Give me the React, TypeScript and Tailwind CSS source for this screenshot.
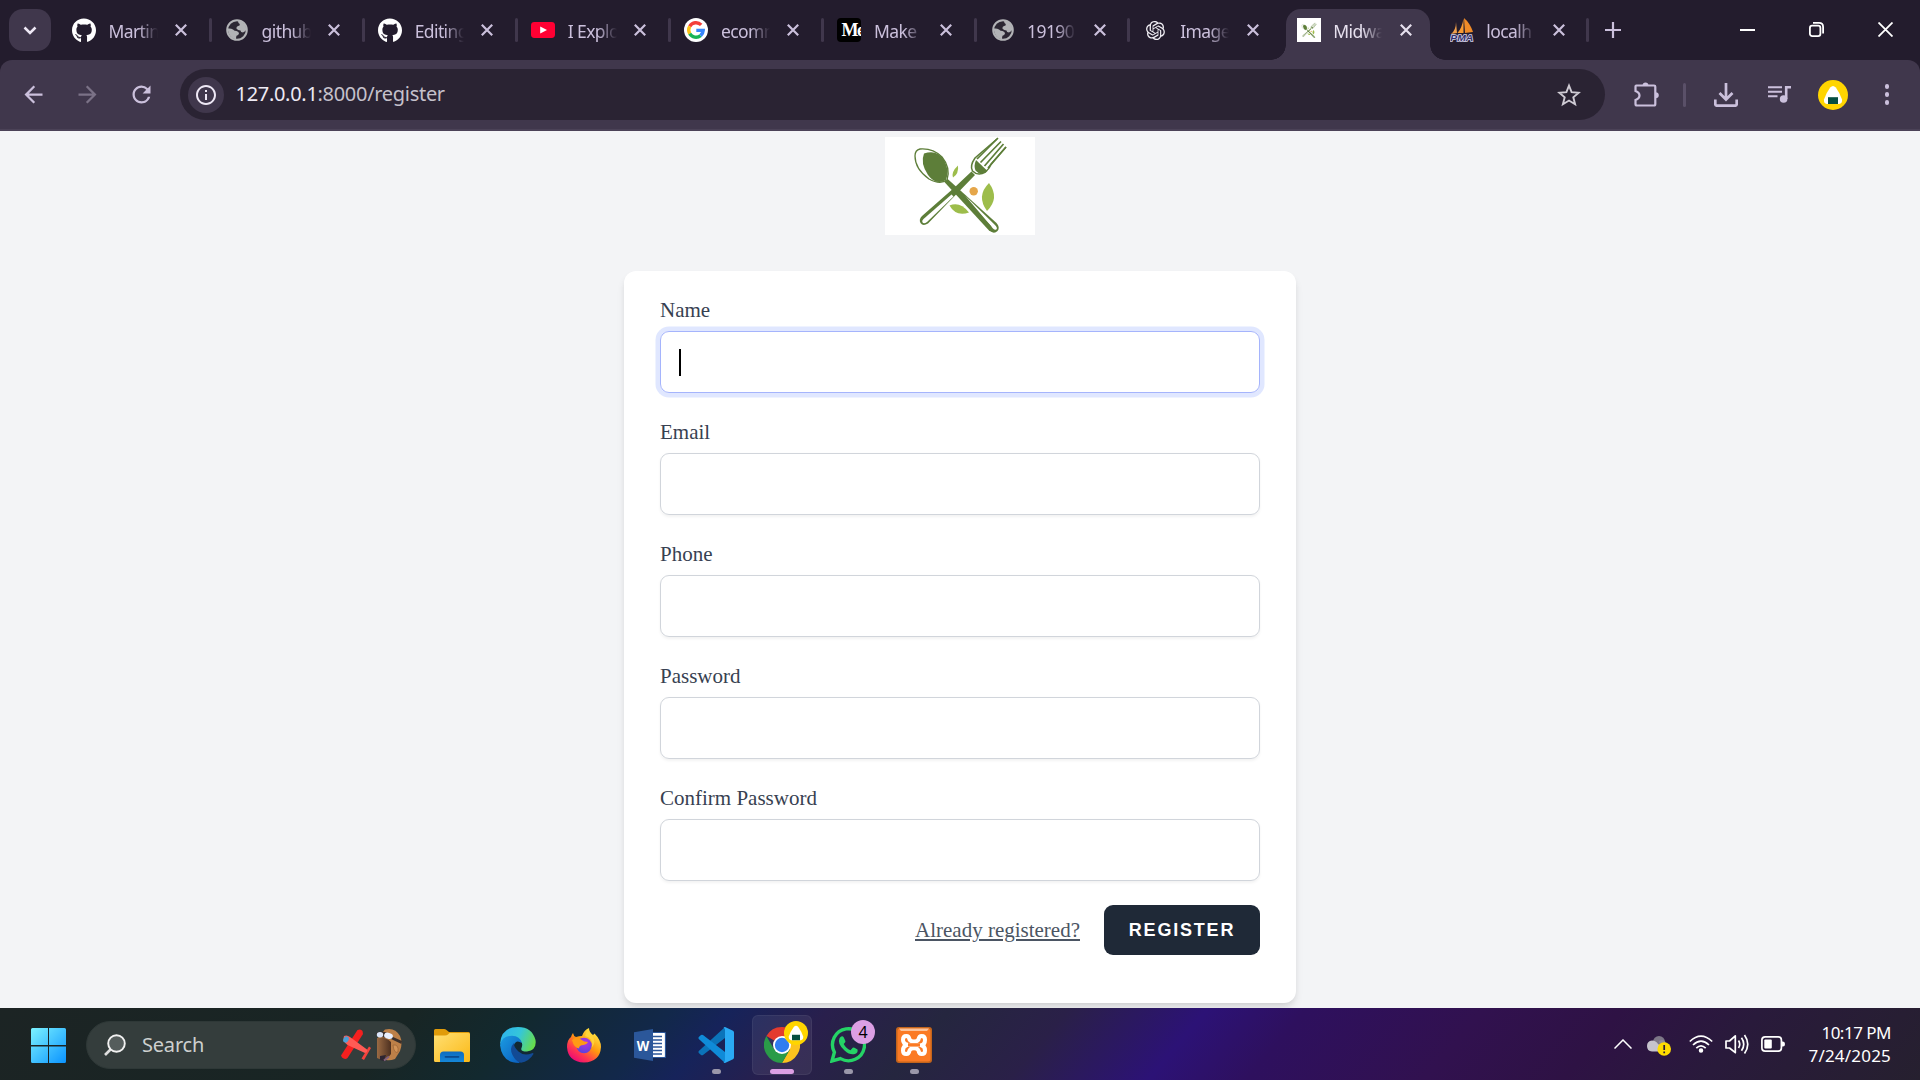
import type { ReactNode } from "react";
import { FaGithub } from "react-icons/fa";
import { RiOpenaiFill } from "react-icons/ri";
import {
  MdArrowBack,
  MdArrowForward,
  MdInfoOutline,
  MdRefresh,
} from "react-icons/md";

/* ---------- favicons ---------- */

const Globe = () => (
  <svg viewBox="0 0 22 22" className="size-[22px]">
    <circle cx="11" cy="11" r="9.800" fill="#2c2733" stroke="#b2b3b6" strokeWidth="2" />
    <path d="M12 1.500 Q19 3 20.500 10 Q20 12.500 17 13.500 Q14.500 13.500 14.500 11.500 Q12 11.500 10.500 9.800 Q10 7.600 12 7 Q14.500 6.500 13.500 4.800 Q12 4 12 1.500Z" fill="#b2b3b6" />
    <path d="M1.500 9.500 Q5 9 7 10.500 Q8.500 12 10.500 12 Q13 12.500 13 14.500 Q12.500 16.500 10.500 16.800 Q10 18 10 20.500 Q3 19.500 1.500 9.500Z" fill="#b2b3b6" />
  </svg>
);

const YouTube = () => (
  <svg viewBox="0 0 24 16" className="h-4 w-6">
    <rect width="24" height="16" rx="3.4" fill="#ff0033" />
    <path d="M9.2 4.4 L16 8 L9.2 11.6Z" fill="#fff" />
  </svg>
);

const Google = () => (
  <svg viewBox="0 0 24 24" className="size-6">
    <circle cx="12" cy="12" r="12" fill="#fff" />
    <g fill="none" strokeWidth="3.4">
      <path d="M17.2 6.9 A7.3 7.3 0 0 0 5.7 8.4" stroke="#f43f3a" />
      <path d="M5.7 8.4 A7.3 7.3 0 0 0 5.7 15.6" stroke="#fcc216" />
      <path d="M5.7 15.6 A7.3 7.3 0 0 0 16.6 17.6" stroke="#18b455" />
      <path d="M16.6 17.6 A7.3 7.3 0 0 0 19.2 12.4 L12.3 12.4" stroke="#3685fb" />
    </g>
  </svg>
);

const Medium = () => (
  <div className="flex size-6 items-center overflow-hidden rounded-[4px] bg-black pl-[4px] font-['Liberation_Serif',serif] text-[18px] leading-6 font-bold tracking-[-1.5px] text-white">
    Me
  </div>
);

const Cutlery = ({ className }: { className: string }) => (
  <svg viewBox="0 0 150 98" className={className}>
    {/* handles */}
    <path d="M86.500 34.500 L90 38 L43 86.500 Q38 89.500 35.500 86 Q33.500 82.500 37 79 L70 50Z" fill="#5d7e39" />
    <path d="M66.500 57.500 L68.500 59.500 L42 85 Q38.500 87.500 37.300 85 Q36.800 83.500 38.500 82Z" fill="#fff" />
    <path d="M61 40.500 L58 43.500 L104 93.500 Q109 97.500 112.500 94 Q115.500 90.500 111.500 86Z" fill="#5d7e39" />
    <path d="M80 58.500 L110 88 Q113 91 111.300 92.500 Q110 93.500 108 91.500 L105.500 88.500Z" fill="#fff" />
    <path d="M78 60 L106 90" stroke="#5d7e39" strokeWidth="1.200" />
    {/* spoon */}
    <path d="M35 12 Q48 11 57 20 Q66 31 62 43 Q55 48 44 42 Q30 32 30 19 Q30 13 35 12Z" fill="#fff" stroke="#5d7e39" strokeWidth="1.300" />
    <path d="M39 16.500 Q52 12 59 23 Q65 34 61 43 Q51 49 43 38 Q35 26 39 16.500Z" fill="#5d7e39" />
    {/* fork */}
    <path d="M112 2 L90 21 Q84.500 29 87.500 34 Q93 39.500 100.500 35 Q105 31 106 27 L121 10" fill="#fff" stroke="#5d7e39" strokeWidth="1.500" />
    <path d="M91 23 L102.500 34 Q95 39 90.500 33.500 Q88.500 29 91 23Z" fill="#5d7e39" />
    <path d="M113 1 L92 22 M116 4.500 L95.500 25.500 M118.500 7 L99.500 29 M121 10 L103 31" stroke="#5d7e39" strokeWidth="1.700" fill="none" />
    {/* leaves */}
    <path d="M73 28.500 Q66 35 68 40.500 Q74 37 73 28.500Z" fill="#9dbd4b" />
    <path d="M104 46 Q91 59 102 74 Q115 61 104 46Z" fill="#9dbd4b" />
    <path d="M64.500 68.500 Q75 64 84 75.500 Q71 80 64.500 68.500Z" fill="#9dbd4b" />
    <circle cx="88.700" cy="54.200" r="4.200" fill="#e5a64a" />
  </svg>
);

const MidwayIcon = () => (
  <div className="flex size-6 items-center justify-center overflow-hidden bg-white">
    <Cutlery className="h-[17px] w-[24px] shrink-0" />
  </div>
);

const PhpMyAdmin = () => (
  <svg viewBox="0 0 24 24" className="size-6">
    <path d="M6 4 Q6 12 1 16 L7 15Z" fill="#f0a04c" />
    <path d="M13.500 .5 Q12 10 7.500 15 L13.500 15Z" fill="#f79a33" />
    <path d="M14 0 Q20 5 23 14 L15 15Z" fill="#ef8b28" />
    <text x=".3" y="23" fontFamily="Liberation Sans, sans-serif" fontSize="9.500" fontWeight="bold" fontStyle="italic" textLength="23" lengthAdjust="spacingAndGlyphs" fill="#34336c" stroke="#d5d2ea" strokeWidth="1.500" paintOrder="stroke">
      PMA
    </text>
  </svg>
);

/* Rice-ball profile picture */
const Onigiri = ({ className }: { className: string }) => (
  <svg viewBox="0 0 30 30" className={className}>
    <circle cx="15" cy="15" r="15" fill="#ffd500" />
    <path d="M12.200 7.400 Q15 4.400 17.800 7.400 Q22 13 24 19.500 Q24.500 23.500 21 24 L9 24 Q5.500 23.500 6 19.500 Q8 13 12.200 7.400Z" fill="#fff" />
    <rect x="10" y="17.200" width="10" height="6.800" fill="#064e40" />
  </svg>
);

/* ---------- tab strip ---------- */

const Cross = () => (
  <svg viewBox="0 0 12 12" className="size-3">
    <path d="M.8 .8 L11.200 11.200 M11.200 .8 L.8 11.200" stroke="currentColor" strokeWidth="2.200" />
  </svg>
);

type TabInfo = { title: string; icon: ReactNode; active?: boolean; noDivider?: boolean };

const tabs: TabInfo[] = [
  { title: "Martin", icon: <FaGithub className="size-[25px] text-white" /> },
  { title: "github", icon: <Globe /> },
  { title: "Editing", icon: <FaGithub className="size-[25px] text-white" /> },
  { title: "I Explo", icon: <YouTube /> },
  { title: "ecomm", icon: <Google /> },
  { title: "Make", icon: <Medium /> },
  { title: "19190", icon: <Globe /> },
  { title: "Image", icon: <RiOpenaiFill className="size-[23px] text-[#f0eef4]" />, noDivider: true },
  { title: "Midwa", icon: <MidwayIcon />, active: true, noDivider: true },
  { title: "localh", icon: <PhpMyAdmin /> },
];

const Tab = ({ title, icon, active, noDivider }: TabInfo) => (
  <div className="flex h-[60px] w-[153.1px] shrink-0 items-start pt-[9px]">
    <div
      className={
        active
          ? "relative flex h-[51px] w-36 items-start rounded-t-[15px] bg-[#40374c] pl-[11px] text-[#e6e0ee]"
          : "relative flex h-[51px] w-36 items-start pl-[11px] text-[#cbc0dc]"
      }
    >
      {active && (
        <>
          <div className="absolute bottom-0 -left-[15px] size-[15px] bg-[radial-gradient(circle_at_0_0,transparent_14.5px,#40374c_15px)]" />
          <div className="absolute -right-[15px] bottom-0 size-[15px] bg-[radial-gradient(circle_at_100%_0,transparent_14.5px,#40374c_15px)]" />
        </>
      )}
      <div className="flex h-[42px] w-6 shrink-0 items-center justify-center">{icon}</div>
      <div className="ml-[12.5px] h-[45px] w-[49px] overflow-hidden [mask-image:linear-gradient(to_right,black_60%,transparent_100%)] text-[17.5px] leading-[45px] tracking-[-0.6px] whitespace-nowrap">
        {title}
      </div>
      <div className="ml-[17.5px] flex h-[42px] items-center">
        <Cross />
      </div>
    </div>
    {!noDivider && <div className="mt-[9px] ml-[3.500px] h-6 w-[3px] rounded-sm bg-[#40374c]" />}
  </div>
);

const TabStrip = () => (
  <div className="flex h-[60px] items-start bg-[#231c2d]">
    <div className="mt-[9px] ml-[9px] flex size-[42px] shrink-0 items-center justify-center rounded-[14px] bg-[#40374c]">
      <svg viewBox="0 0 14 9" className="h-[9px] w-[14px]">
        <path d="M1.500 1.500 L7 7 L12.500 1.500" fill="none" stroke="#eee8f5" strokeWidth="2.500" />
      </svg>
    </div>
    <div className="ml-[10px] flex">
      {tabs.map((t) => (
        <Tab key={t.title} {...t} />
      ))}
    </div>
    <div className="flex h-[60px] w-[42px] shrink-0 items-center justify-center">
      <svg viewBox="0 0 16 16" className="size-4 shrink-0">
        <path d="M8 0 V16 M0 8 H16" stroke="#cbc0dc" strokeWidth="2.200" />
      </svg>
    </div>
    <div className="ml-auto flex h-[59px] items-center text-white">
      <div className="flex w-[69px] justify-center">
        <div className="h-[2px] w-[15px] bg-white" />
      </div>
      <div className="flex w-[69px] justify-center">
        <svg viewBox="0 0 15 15" className="size-[15px]" fill="none" stroke="#fff" strokeWidth="1.800">
          <rect x=".9" y="3.600" width="10.500" height="10.500" rx="2.300" />
          <path d="M4 .9 H10 Q14.100 .9 14.100 5 V11.500" />
        </svg>
      </div>
      <div className="flex w-[69px] justify-center">
        <svg viewBox="0 0 15 15" className="size-[15px]">
          <path d="M.5 .5 L14.500 14.500 M14.500 .5 L.5 14.500" stroke="#fff" strokeWidth="1.800" />
        </svg>
      </div>
    </div>
  </div>
);

/* ---------- toolbar ---------- */

const Toolbar = () => (
  <div className="h-[71px] bg-[#231c2d]">
    <div className="flex h-[71px] items-center rounded-t-[12px] border-b-2 border-[#4b4257] bg-[#40374c] text-[#cbc0dc]">
      <div className="ml-[6px] flex w-[54px] justify-center">
        <MdArrowBack className="size-[27px]" />
      </div>
      <div className="flex w-[54px] justify-center">
        <MdArrowForward className="size-[27px] text-[#7b7287]" />
      </div>
      <div className="flex w-[54px] justify-center">
        <MdRefresh className="size-[27px]" />
      </div>
      <div className="ml-[12px] flex h-[51px] w-[1425px] items-center rounded-full bg-[#2a2333] pl-[8px]">
        <div className="flex size-9 items-center justify-center rounded-full bg-[#40374c]">
          <MdInfoOutline className="size-6 text-[#eee8f5]" />
        </div>
        <div className="mb-[2px] ml-[11.5px] text-[20px] leading-[30px] tracking-[-0.3px] text-[#c5c1cb]">
          <span className="text-[#eeeaf4]">127.0.0.1</span>:8000/register
        </div>
        <svg viewBox="0 0 24 24" className="mr-[24px] ml-auto size-[24px]">
          <path d="M12 2.600 L14.600 9.200 L21.800 9.700 L16.300 14.300 L18.100 21.300 L12 17.500 L5.900 21.300 L7.700 14.300 L2.200 9.700 L9.400 9.200Z" fill="none" stroke="#cfcbd4" strokeWidth="1.900" />
        </svg>
      </div>
      <div className="ml-[27px] flex w-[28px] justify-center">
        <svg viewBox="0 0 26 26" className="size-[26px]">
          <path d="M3.300 3.500 H21 Q22.300 3.500 22.300 4.800 V22 Q22.300 23.500 21 23.500 H4 Q2.500 23.500 2.500 22 V18 Q6.500 16.500 6.500 13.500 Q6.500 10.500 2.500 9 V4.500 Q2.500 3.500 3.300 3.500Z" fill="none" stroke="currentColor" strokeWidth="2.200" />
          <path d="M9.500 3.500 Q9.700 .5 12.500 .5 Q15.300 .5 15.500 3.500Z M22.500 10.300 Q25.800 10.500 25.800 13.300 Q25.800 16.100 22.500 16.300Z" fill="currentColor" />
        </svg>
      </div>
      <div className="ml-[23px] h-6 w-[3px] rounded bg-[#5a5068]" />
      <svg viewBox="0 0 24 24" className="ml-[28px] size-6">
        <path d="M12 0 V16 M5.500 10 L12 16.500 L18.500 10 M1.300 16.500 V21 Q1.300 22.700 3 22.700 H21 Q22.700 22.700 22.700 21 V16.500" fill="none" stroke="currentColor" strokeWidth="2.700" />
      </svg>
      <svg viewBox="0 0 23 17" className="ml-[30px] h-[17px] w-[23px]">
        <path d="M0 1.200 H14 M0 5.700 H14 M0 10.200 H9.500" stroke="currentColor" strokeWidth="2" />
        <path d="M18.200 13 V1.200 H23" fill="none" stroke="currentColor" strokeWidth="2.600" />
        <circle cx="15.600" cy="13" r="3.800" fill="currentColor" />
      </svg>
      <Onigiri className="ml-[27px] size-[30px]" />
      <div className="ml-[36.5px] flex w-[6px] flex-col gap-[3.5px]">
        <div className="size-[4.5px] rounded-full bg-[#cbc0dc]" />
        <div className="size-[4.5px] rounded-full bg-[#cbc0dc]" />
        <div className="size-[4.5px] rounded-full bg-[#cbc0dc]" />
      </div>
    </div>
  </div>
);

/* ---------- page ---------- */

const fields = ["Name", "Email", "Phone", "Password", "Confirm Password"];

const RegisterPage = () => (
  <main className="flex h-[877px] flex-col items-center overflow-hidden bg-[#f3f4f6] pt-[6px] font-['Liberation_Serif',serif]">
    <div className="h-[98px] w-[150px] shrink-0 bg-white">
      <Cutlery className="h-[98px] w-[150px]" />
    </div>
    <form className="mt-9 h-[732px] w-[672px] shrink-0 rounded-xl bg-white px-9 py-6 shadow-[0_6px_9px_-1.5px_rgba(0,0,0,0.1),0_3px_6px_-3px_rgba(0,0,0,0.1)]">
      <div className="flex flex-col gap-6">
        {fields.map((f, i) => (
          <div key={f}>
            <label className="block text-[21px] leading-[30px] text-[#374151]">{f}</label>
            <div
              className={
                i === 0
                  ? "mt-[6px] flex h-[62px] items-center rounded-[9px] border border-[#a5b4fc] pl-[18px] shadow-[0_0_0_4.5px_#e0e7ff]"
                  : "mt-[6px] h-[62px] rounded-[9px] border border-[#d1d5db] shadow-[0_1.5px_3px_rgba(0,0,0,0.05)]"
              }
            >
              {i === 0 && <div className="h-[27px] w-[2px] bg-black" />}
            </div>
          </div>
        ))}
      </div>
      <div className="mt-6 flex items-center justify-end">
        <a className="text-[21px] leading-[30px] text-[#4b5563] underline">Already registered?</a>
        <button
          type="button"
          className="ml-6 h-[50px] w-[156px] rounded-[9px] bg-[#1f2937] font-['Liberation_Sans',sans-serif] text-[18px] font-bold tracking-[1.8px] text-white"
        >
          REGISTER
        </button>
      </div>
    </form>
  </main>
);

/* ---------- taskbar icons ---------- */

const Start = () => (
  <svg viewBox="0 0 35 35" className="size-[35px]">
    <defs>
      <linearGradient id="win" x1="0" y1="0" x2="35" y2="35" gradientUnits="userSpaceOnUse">
        <stop offset="0" stopColor="#7cf3ff" />
        <stop offset="1" stopColor="#0a93ff" />
      </linearGradient>
    </defs>
    <path d="M1.500 0 H17 V17 H0 V1.500 Q0 0 1.500 0Z M18 0 H33.500 Q35 0 35 1.500 V17 H18Z M0 18.500 H17 V35 H1.500 Q0 35 0 33.500Z M18 18.500 H35 V33.500 Q35 35 33.500 35 H18Z" fill="url(#win)" />
  </svg>
);

const Plane = () => (
  <svg viewBox="0 0 30 32" className="h-8 w-[30px]">
    <path d="M16.500 1 Q20 -.5 21.500 2 L22 5 L6.500 29 Q4 31 1 28.500 L0 26.500 Z" fill="#f5201f" />
    <path d="M28 17.500 L30 19 L23 31 L20.500 29.500Z" fill="#f5423c" />
    <path d="M3 7 Q6 5.500 9 8 L26 20.500 Q27 23 24 24 L6.500 16 Q1 12 3 7Z" fill="#ff5b55" />
    <ellipse cx="5" cy="10.500" rx="2.600" ry="3.300" fill="#4aa0d8" transform="rotate(30 5 10.500)" />
  </svg>
);

const Aviator = () => (
  <svg viewBox="0 0 27 34" className="h-[34px] w-[27px]">
    <defs>
      <linearGradient id="muzzle" x1="0" x2="1">
        <stop offset="0" stopColor="#9a6a43" />
        <stop offset="1" stopColor="#4d3020" />
      </linearGradient>
    </defs>
    <path d="M9 1.500 Q19 -1 24 8 Q27 15 24 23 L19 31 Q14 33 10 32 L2 30 L1 11Z" fill="#bd8048" />
    <path d="M1 10 Q9 8 15 14 L15 26 Q11 32 6 32 L1 30Z" fill="url(#muzzle)" />
    <path d="M17 17 Q23 16 22 24 Q18 26 17 17Z" fill="#d29357" stroke="#9a6335" strokeWidth=".7" />
    <path d="M0 5 Q9 1 17 9 L26 13 L25.500 16 L15 11 L1 8Z" fill="#3b302c" />
    <ellipse cx="4" cy="6.800" rx="3.200" ry="2.700" fill="#dbe6fb" />
    <ellipse cx="12.500" cy="7.800" rx="4.500" ry="3" fill="#e9f0ff" transform="rotate(15 12.500 7.800)" />
    <path d="M4 28 L10 27 L8 33 L4 32Z" fill="#2d2430" />
    <path d="M8 32.500 L13 28.500" stroke="#81607c" strokeWidth="2" />
  </svg>
);

const Explorer = () => (
  <svg viewBox="0 0 36 33" className="h-[33px] w-9">
    <defs>
      <linearGradient id="folder" x1="0" y1="0" x2="1" y2="1">
        <stop offset="0" stopColor="#ffdf73" />
        <stop offset="1" stopColor="#fbb916" />
      </linearGradient>
      <linearGradient id="drawer" x1="0" y1="0" x2="0" y2="1">
        <stop offset="0" stopColor="#0f6cc0" />
        <stop offset="1" stopColor="#1587d8" />
      </linearGradient>
    </defs>
    <path d="M0 1.500 Q0 0 1.500 0 H10 Q11.500 0 12.500 1 L15 3 H34.500 Q36 3 36 4.500 V12 H0Z" fill="#e09b0a" />
    <path d="M0 6.500 H11 Q13 6.500 14 5.500 L15.500 4 H34.500 Q36 4 36 5.500 V31.500 Q36 33 34.500 33 H1.500 Q0 33 0 31.500Z" fill="url(#folder)" />
    <path d="M6 26 Q6 22.500 9.500 22.500 H26.500 Q30 22.500 30 26 V33 H6Z" fill="url(#drawer)" />
    <path d="M11.500 27.800 H24.500" stroke="#0b4a8f" strokeWidth="1.800" strokeLinecap="round" />
  </svg>
);

const Edge = () => (
  <svg viewBox="0 0 36 36" className="size-9">
    <defs>
      <linearGradient id="edgeTop" x1="0" y1=".3" x2="1" y2=".6">
        <stop offset="0" stopColor="#2db4ee" />
        <stop offset=".5" stopColor="#35c6d9" />
        <stop offset="1" stopColor="#67dd49" />
      </linearGradient>
      <linearGradient id="edgeLeft" x1="0" y1="0" x2="1" y2="1">
        <stop offset="0" stopColor="#1b9ce2" />
        <stop offset="1" stopColor="#0a5cbd" />
      </linearGradient>
    </defs>
    <path d="M0 17 Q1 0 18 0 Q32 0 35.500 13 Q37 23 27 24.500 Q20 24.500 21.500 21 Q24 15 18 13 Q10 7 0 17Z" fill="url(#edgeTop)" />
    <path d="M0 18 Q2 9 12 8.700 Q20 9 22 16 Q16 12 14 18 Q13 27 22 32 L19 36 Q2 36 0 18Z" fill="url(#edgeLeft)" />
    <path d="M14 16 Q9 21 12.500 28 Q16 35 21 35.700 Q29 34.500 33.500 27 Q33.300 25.500 32 26.300 Q24 29.500 18.500 24.500 Q13.500 20 14 16Z" fill="#124a94" />
  </svg>
);

const Firefox = () => (
  <svg viewBox="0 0 34 35" className="h-[35px] w-[34px]">
    <defs>
      <linearGradient id="fox" x1=".85" y1=".05" x2=".2" y2=".95">
        <stop offset="0" stopColor="#fff04a" />
        <stop offset=".45" stopColor="#ff980e" />
        <stop offset=".75" stopColor="#ff3750" />
        <stop offset="1" stopColor="#eb0878" />
      </linearGradient>
      <radialGradient id="foxCore" cx=".6" cy=".3" r=".7">
        <stop offset="0" stopColor="#b833e1" />
        <stop offset="1" stopColor="#5b42de" />
      </radialGradient>
    </defs>
    <path d="M6 5 Q6.500 8 9 9 Q12 8 15 8 Q17 2 22 0 Q22 4 26 7 Q27 6 27.500 5.500 Q34 12 34 19 Q33 34 17 34.500 Q1 34 0 19 Q0 12 4 9 Q4.500 7 6 5Z" fill="url(#fox)" />
    <circle cx="17" cy="17.500" r="7.800" fill="url(#foxCore)" />
    <path d="M5 12 Q9 8 14 11.500 Q17 14 21 14 Q20 16.500 16.500 17 Q12 17 12 20.500 Q7 20 5 12Z" fill="#ff9a15" />
    <path d="M18 8 Q27 10 24.500 20 Q30 14 25 7 L20 3Z" fill="#ffd83c" opacity=".8" />
  </svg>
);

const Word = () => (
  <svg viewBox="0 0 32 32" className="size-8">
    <rect x="17" y="3.500" width="14.500" height="25" rx="1" fill="#fff" stroke="#2b579a" strokeWidth="1.200" />
    <path d="M19 7.500 H28 M19 11 H28 M19 14.500 H28 M19 18 H28 M19 21.500 H28 M19 25 H28" stroke="#2b579a" strokeWidth="1.500" />
    <path d="M0 3.200 L19 0 V32 L0 28.800Z" fill="#2b579a" />
    <text x="2.800" y="21.500" fontFamily="Open Sans, sans-serif" fontSize="15" fontWeight="bold" textLength="12.500" lengthAdjust="spacingAndGlyphs" fill="#fff">
      W
    </text>
  </svg>
);

const VsCode = () => (
  <svg viewBox="0 0 36 36" className="size-9">
    <path d="M27 0 L.8 24 Q0 25 .8 26 L3 28 Q4 28.500 5 28 L27 11Z" fill="#0b74ba" />
    <path d="M27 36 L.8 12 Q0 11 .8 10 L3 8 Q4 7.500 5 8 L27 25Z" fill="#0f8bd8" />
    <path d="M27 0 L35 3.800 Q36 4.400 36 5.500 V30.500 Q36 31.600 35 32.200 L27 36 Q26 36 25.500 35 Q27 35 27 33.500 V2.500 Q27 1 25.500 1 Q26 0 27 0Z" fill="#2aaaf4" />
  </svg>
);

const Chrome = () => (
  <svg viewBox="0 0 36 36" className="size-9">
    <path d="M18 18 L2.410 9 A18 18 0 0 1 33.590 9Z" fill="#e33b2e" />
    <path d="M18 9 H33.590 A18 18 0 0 1 18 36 L25.800 22.500Z" fill="#fcc31e" />
    <path d="M10.200 22.500 L2.410 9 A18 18 0 0 0 18 36 L25.800 22.500Z" fill="#2a9b48" />
    <circle cx="18" cy="18" r="9" fill="#fff" />
    <circle cx="18" cy="18" r="7.200" fill="#2f7cf0" />
  </svg>
);

const WhatsApp = () => (
  <svg viewBox="0 0 36 36" className="size-9">
    <path d="M2 34 L4.400 25.300 A16 16 0 1 1 10.500 31.600 Z" fill="none" stroke="#25d366" strokeWidth="3.400" />
    <path d="M10.500 10 Q12.500 8.500 13.800 10.500 L15.500 14.200 Q15.500 15.500 13.700 17 Q16 21.500 20.500 23.200 L22.700 20.800 Q23.500 20.300 24.500 20.800 L27.500 22.400 Q28.300 25.500 25 27 Q20 28.500 14.500 23.500 Q7 16.500 9.500 11.200Z" fill="#25d366" />
  </svg>
);

const Xampp = () => (
  <svg viewBox="0 0 36 36" className="size-9">
    <rect width="36" height="36" rx="3" fill="#c2641c" />
    <rect x="1.500" y="1.500" width="33" height="33" rx="2.500" fill="#fb7a24" />
    <path d="M3 1.500 H33 L31 4 H5Z" fill="#fcc39a" />
    <path d="M12 17.800 Q7 17 7 12.700 Q7 9 10.300 9 Q13 9 13.500 12.500 Q14.500 14.500 18 14.500 Q21.500 14.500 22.500 12.500 Q23 9 25.700 9 Q29 9 29 12.700 Q29 17.500 25 18.300 Q29 19 29 23.500 Q29 27 25.700 27 Q23 27 22.500 23.500 Q21.500 21.300 18 21.300 Q14.500 21.300 13.500 23.500 Q13 27 10.300 27 Q7 27 7 23.500 Q7 19 11 18 H24" fill="none" stroke="#fff" strokeWidth="4" strokeLinejoin="round" />
    <path d="M12 17.900 H24" stroke="#fb7a24" strokeWidth="3.400" />
  </svg>
);

type TaskbarApp = { name: string; icon: ReactNode; running?: boolean; active?: boolean; badge?: ReactNode };

const apps: TaskbarApp[] = [
  { name: "explorer", icon: <Explorer /> },
  { name: "edge", icon: <Edge /> },
  { name: "firefox", icon: <Firefox /> },
  { name: "word", icon: <Word /> },
  { name: "vscode", icon: <VsCode />, running: true },
  { name: "chrome", icon: <Chrome />, active: true, badge: <Onigiri className="size-6" /> },
  {
    name: "whatsapp",
    icon: <WhatsApp />,
    running: true,
    badge: (
      <div className="flex size-6 items-center justify-center rounded-full bg-[#dc9fe4] text-[16px] leading-6 text-black">4</div>
    ),
  },
  { name: "xampp", icon: <Xampp />, running: true },
];

const Taskbar = () => (
  <footer className="flex h-[72px] items-center bg-[linear-gradient(130deg,#1c2424_0%,#182524_21%,#12292f_27%,#12284a_34%,#16235a_37%,#291f4c_42%,#25263f_48%,#2a2048_54%,#2c1276_61%,#2e105e_66%,#31114f_75%,#2e1244_82%,#291a3b_89%,#26202f_100%)] pt-[2px]">
    <div className="ml-[31px]">
      <Start />
    </div>
    <div className="ml-5 flex h-12 w-[330px] items-center rounded-full border border-[#2e3837] bg-[#343d3c] pl-[17px]">
      <svg viewBox="0 0 22 22" className="size-[22px]">
        <path d="M6.500 15.500 L1 21" stroke="#dedede" strokeWidth="2.600" />
        <circle cx="12.500" cy="9.500" r="8.300" fill="#555d5c" stroke="#f1f1f1" strokeWidth="1.900" />
      </svg>
      <span className="ml-[16px] text-[20px] leading-[30px] tracking-[-0.2px] text-[#cdd0cf]">Search</span>
      <div className="mr-[12px] ml-auto flex items-center gap-[5px]">
        <Plane />
        <Aviator />
      </div>
    </div>
    <div className="ml-[3px] flex">
      {apps.map((a) => (
        <div key={a.name} className="flex h-[70px] w-[66px] items-center justify-center">
          <div
            className={
              a.active
                ? "relative flex size-[60px] items-center justify-center rounded-[6px] border border-white/5 bg-white/7"
                : "relative flex size-[60px] items-center justify-center"
            }
          >
            {a.icon}
            {a.badge && <div className="absolute top-[5px] right-[3px]">{a.badge}</div>}
            {a.running && <div className="absolute bottom-px h-[5px] w-[9px] rounded-full bg-[#9a97aa]" />}
            {a.active && <div className="absolute bottom-0 h-[5px] w-6 rounded-full bg-[#dc9fe4]" />}
          </div>
        </div>
      ))}
    </div>
    <div className="ml-auto flex items-center pb-[2px] text-white">
      <svg viewBox="0 0 18 10" className="h-[10px] w-[18px]">
        <path d="M.5 9.500 L9 1 L17.500 9.500" fill="none" stroke="#fff" strokeWidth="1.500" />
      </svg>
      <svg viewBox="0 0 24 20" className="mt-[3px] ml-[15px] h-5 w-6">
        <circle cx="12" cy="6" r="6" fill="#7d7787" />
        <path d="M12 5 Q18 2 19 8 L14 14Z" fill="#8f8a98" />
        <path d="M5 4.500 Q9 4.500 11 8 L16 12 Q14 15.500 11 15.500 H5 Q0 15 0 10 Q0 5 5 4.500Z" fill="#c6c3cc" />
        <circle cx="17.200" cy="13" r="6.800" fill="#ffdc00" />
        <path d="M17.200 9 V14 M17.200 15.500 V17.300" stroke="#2b1c38" strokeWidth="1.700" />
      </svg>
      <svg viewBox="0 0 24 18" className="ml-[18px] h-[18px] w-6" fill="none" stroke="#fff" strokeWidth="1.700">
        <path d="M.8 6.500 Q12 -4.200 23.200 6.500 M4 10 Q12 2.300 20 10 M7.300 13.200 Q12 8.500 16.700 13.200" />
        <circle cx="12" cy="15.500" r="1.400" fill="#fff" />
      </svg>
      <svg viewBox="0 0 24 21" className="ml-3 h-[21px] w-6" fill="none" stroke="#fff" strokeWidth="1.700">
        <path d="M1 7 H4.500 L10.300 1.800 V18.700 L4.500 14 H1Z" strokeLinejoin="round" />
        <path d="M13.500 6.500 Q16 10.300 13.500 14 M16.500 3.800 Q21 10.300 16.500 16.800 M19.500 1 Q26 10.300 19.500 19.500" />
      </svg>
      <svg viewBox="0 0 24 16" className="ml-3 h-4 w-6">
        <rect x=".9" y=".9" width="19.500" height="14.200" rx="3.200" fill="none" stroke="#fff" strokeWidth="1.700" />
        <rect x="3.300" y="3.500" width="7.500" height="9" rx="1" fill="#fff" />
        <path d="M21 5.500 H22 Q24 5.500 24 8 Q24 10.500 22 10.500 H21Z" fill="#fff" />
      </svg>
      <div className="mr-[29px] w-[106px] text-right text-[17px] leading-[23px] whitespace-nowrap">
        <div className="tracking-[-0.5px]">10:17 PM</div>
        <div className="tracking-[0.2px]">7/24/2025</div>
      </div>
    </div>
  </footer>
);

export default function App() {
  return (
    <div className="h-[1080px] w-[1920px] overflow-hidden font-['Noto_Sans','Open_Sans',sans-serif]">
      <TabStrip />
      <Toolbar />
      <RegisterPage />
      <Taskbar />
    </div>
  );
}
